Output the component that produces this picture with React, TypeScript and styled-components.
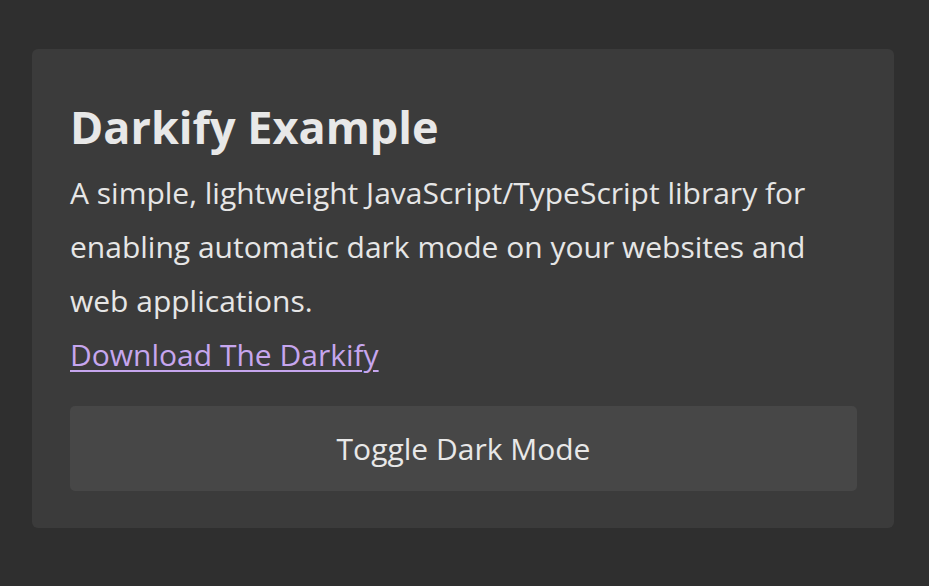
import React from 'react';
import styled, { createGlobalStyle } from 'styled-components';

const GlobalStyle = createGlobalStyle`
  html, body {
    margin: 0;
    padding: 0;
    background: #2f2f2f;
  }
  body {
    font-family: "Open Sans", "Liberation Sans", sans-serif;
    color: #e6e6e6;
  }
`;

const Page = styled.div`
  width: 929px;
  height: 586px;
  box-sizing: border-box;
  padding: 49px 35px 0 32px;
  background: #2f2f2f;
`;

const Card = styled.div`
  box-sizing: border-box;
  height: 479px;
  background: #3b3b3b;
  border-radius: 6px;
  padding: 52px 37px 37px 38px;
  display: flex;
  flex-direction: column;
`;

const Title = styled.h1`
  margin: 0 0 13px;
  font-size: 45px;
  font-weight: 700;
  line-height: 52px;
  color: #e8e8e8;
`;

const Description = styled.p`
  margin: 0;
  font-size: 30px;
  line-height: 54px;
  color: #e6e6e6;
`;

const DownloadLink = styled.a`
  font-size: 30px;
  line-height: 54px;
  color: #c6a6ee;
  text-decoration: underline;
  text-underline-offset: 4px;
  text-decoration-thickness: 2px;
  align-self: flex-start;
`;

const ToggleButton = styled.button`
  margin-top: 24px;
  height: 85px;
  border: none;
  border-radius: 5px;
  background: #474747;
  color: #e8e8e8;
  font-family: "Open Sans", "Liberation Sans", sans-serif;
  font-size: 30px;
  cursor: pointer;
`;

export default function App() {
  return (
    <>
      <GlobalStyle />
      <Page>
        <Card>
          <Title>Darkify Example</Title>
          <Description>
            A simple, lightweight JavaScript/TypeScript library for enabling automatic dark mode on your websites and web applications.
          </Description>
          <DownloadLink href="#">Download The Darkify</DownloadLink>
          <ToggleButton>Toggle Dark Mode</ToggleButton>
        </Card>
      </Page>
    </>
  );
}
